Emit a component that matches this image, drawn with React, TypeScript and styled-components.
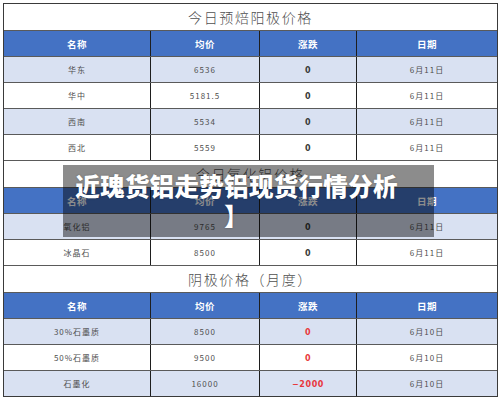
import React from 'react';
import styled, { createGlobalStyle } from 'styled-components';

const GlobalStyle = createGlobalStyle`
    * {
        box-sizing: border-box;
    }
    body {
        margin: 0;
        background: #ffffff;
        font-family: "Noto Sans CJK SC", "Noto Sans", sans-serif;
    }
`;

const Page = styled.div`
    position: relative;
    width: 500px;
    height: 402px;
    padding: 3px 0 0 3px;
`;

const Sheet = styled.div`
    width: 495px;
    border: 1px solid #3a3a3a;
    display: flex;
    flex-direction: column;
`;

const TitleRow = styled.div<{ $first?: boolean }>`
    height: ${p => (p.$first ? '26px' : '27px')};
    border-top: ${p => (p.$first ? 'none' : '1px solid #5a5a5a')};
    display: flex;
    align-items: center;
    justify-content: center;
    font-size: 14px;
    font-weight: 300;
    letter-spacing: 1.6px;
    color: #505050;
    background: #ffffff;
`;

const Row = styled.div<{ $kind: 'head' | 'shade' | 'plain' }>`
    height: 26px;
    border-top: 1px solid #5a5a5a;
    display: grid;
    grid-template-columns: 146px 109px 97px 1fr;
    background: ${p => (p.$kind === 'head' ? '#4472c4' : p.$kind === 'shade' ? '#d9e1f2' : '#ffffff')};
`;

const Cell = styled.div<{ $head?: boolean; $first?: boolean }>`
    display: flex;
    align-items: center;
    justify-content: center;
    border-left: ${p => (p.$first ? 'none' : '1px solid #1e1e1e')};
    font-size: ${p => (p.$head ? '9.5px' : '8px')};
    font-weight: ${p => (p.$head ? 700 : 400)};
    letter-spacing: ${p => (p.$head ? '0.5px' : '1px')};
    color: ${p => (p.$head ? '#ffffff' : '#4e4e4e')};
`;

const Change = styled.span<{ $red?: boolean }>`
    font-family: "DejaVu Sans", "Noto Sans", sans-serif;
    font-size: 8px;
    font-weight: 700;
    line-height: 1;
    margin-top: 2px;
    letter-spacing: 0.6px;
    color: ${p => (p.$red ? '#e8383d' : '#3a3a3a')};
`;

const Banner = styled.div`
    position: absolute;
    left: 63px;
    top: 165px;
    width: 371px;
    height: 72px;
    background: rgba(0, 0, 0, 0.45);
    padding: 6px 24px 0 0;
    text-align: center;
    color: #ffffff;
    font-size: 24.5px;
    font-weight: 900;
    line-height: 30px;
    letter-spacing: 0.3px;
    text-shadow: 0 0 2px rgba(0, 0, 0, 0.3);
`;

type Item = { name: string; price: string; change: string; date: string };

type Section = { title: string; red?: boolean; items: Item[] };

const sections: Section[] = [
    {
        title: '今日预焙阳极价格',
        items: [
            { name: '华东', price: '6536', change: '0', date: '6月11日' },
            { name: '华中', price: '5181.5', change: '0', date: '6月11日' },
            { name: '西南', price: '5534', change: '0', date: '6月11日' },
            { name: '西北', price: '5559', change: '0', date: '6月11日' },
        ],
    },
    {
        title: '今日氧化铝价格',
        items: [
            { name: '氧化铝', price: '9765', change: '0', date: '6月11日' },
            { name: '冰晶石', price: '8500', change: '0', date: '6月11日' },
        ],
    },
    {
        title: '阴极价格（月度）',
        red: true,
        items: [
            { name: '30%石墨质', price: '8500', change: '0', date: '6月10日' },
            { name: '50%石墨质', price: '9500', change: '0', date: '6月10日' },
            { name: '石墨化', price: '16000', change: '−2000', date: '6月10日' },
        ],
    },
];

export default function App() {
    return (
        <Page>
            <GlobalStyle />
            <Sheet>
                {sections.map((s, si) => (
                    <React.Fragment key={s.title}>
                        <TitleRow $first={si === 0}>{s.title}</TitleRow>
                        <Row $kind="head">
                            <Cell $head $first>名称</Cell>
                            <Cell $head>均价</Cell>
                            <Cell $head>涨跌</Cell>
                            <Cell $head>日期</Cell>
                        </Row>
                        {s.items.map((it, i) => (
                            <Row key={it.name} $kind={i % 2 === 0 ? 'shade' : 'plain'}>
                                <Cell $first>{it.name}</Cell>
                                <Cell>{it.price}</Cell>
                                <Cell><Change $red={s.red}>{it.change}</Change></Cell>
                                <Cell>{it.date}</Cell>
                            </Row>
                        ))}
                    </React.Fragment>
                ))}
            </Sheet>
            <Banner>近瑰货铝走势铝现货行情分析<br />】</Banner>
        </Page>
    );
}
